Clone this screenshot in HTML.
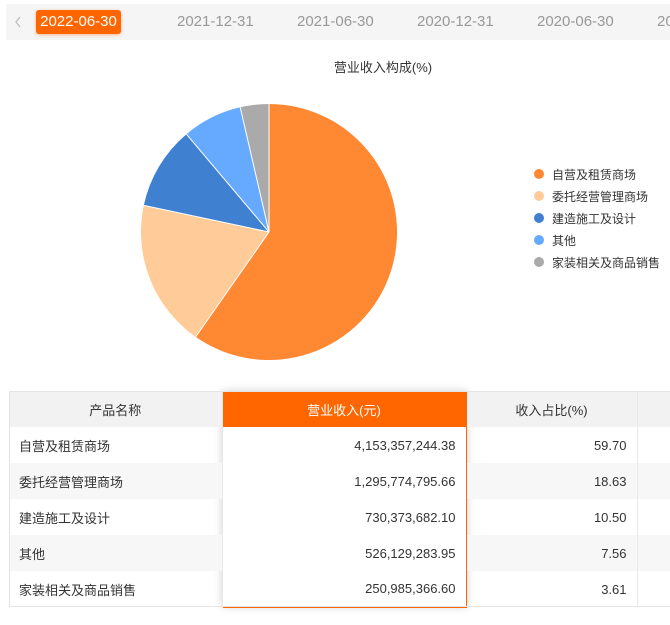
<!DOCTYPE html>
<html><head><meta charset="utf-8"><style>
*{margin:0;padding:0;box-sizing:border-box}
body{width:670px;height:625px;background:#fff;font-family:"Liberation Sans","Noto Sans CJK SC",sans-serif;position:relative;overflow:hidden;color:#333}
.bar{position:absolute;left:6px;top:4px;width:700px;height:36px;background:#f5f5f5}
.tab{position:absolute;top:10px;height:24px;line-height:24px;font-size:15px;color:#999}
.act{left:36px;width:85px;background:#ff6600;color:#fff;text-align:center;border-radius:3px;box-shadow:0 1px 3px rgba(255,102,0,.4)}
.title{position:absolute;top:57px;left:0;width:766px;text-align:center;font-size:13px;color:#333}
.leg{position:absolute;left:534px;font-size:12px;color:#333}
.leg i{position:absolute;left:0;top:3px;width:10px;height:10px;border-radius:50%}
.leg span{margin-left:18px}
.sh{position:absolute;left:222px;top:391px;width:245px;height:216px;box-shadow:0 0 8px rgba(0,0,0,.18)}
table{position:absolute;left:9px;top:391px;border-collapse:collapse;font-size:13px;width:680px}
td{height:36px;padding:0 10px;border-right:1px solid #e8e8e8}
tr.h td{background:#f2f2f2;text-align:center;color:#333}
tr.g td{background:#f7f7f7}
td.c{background:#fff!important;border-left:1px solid #ff6600;border-right:1px solid #ff6600;text-align:right}
tr.h td.c{background:#ff6600!important;color:#fff;text-align:center}
tr.l td.c{border-bottom:1px solid #ff6600}
td.r{text-align:right}
.frame{position:absolute;left:9px;top:391px;width:670px;height:216px;border:1px solid #e5e5e5;pointer-events:none}
</style></head><body>
<div class="bar"></div>
<svg style="position:absolute;left:14px;top:16px" width="8" height="12"><path d="M6,1 L2,6 L6,11" stroke="#bbb" stroke-width="1.2" fill="none"/></svg>
<div class="tab act">2022-06-30</div>
<div class="tab" style="left:177px">2021-12-31</div>
<div class="tab" style="left:297px">2021-06-30</div>
<div class="tab" style="left:417px">2020-12-31</div>
<div class="tab" style="left:537px">2020-06-30</div>
<div class="tab" style="left:657px">20</div>
<div class="title">营业收入构成(%)</div>
<svg style="position:absolute;left:0;top:0" width="670" height="380">
<path d="M269,232 L269,104 A128,128 0 1 1 195.7,336.9 Z" fill="#ff8833"/>
<path d="M269,232 L195.7,336.9 A128,128 0 0 1 143.8,205.4 Z" fill="#ffcc99"/>
<path d="M269,232 L143.8,205.4 A128,128 0 0 1 186.4,134.2 Z" fill="#4080d0"/>
<path d="M269,232 L186.4,134.2 A128,128 0 0 1 240.2,107.3 Z" fill="#66aaff"/>
<path d="M269,232 L240.2,107.3 A128,128 0 0 1 269,104 Z" fill="#aaaaaa"/>
<g stroke="#fff" stroke-width="1" fill="none">
<path d="M269,232 L269,104 M269,232 L195.7,336.9 M269,232 L143.8,205.4 M269,232 L186.4,134.2 M269,232 L240.2,107.3"/></g>
</svg>
<div class="leg" style="top:166px"><i style="background:#ff8833"></i><span>自营及租赁商场</span></div>
<div class="leg" style="top:188px"><i style="background:#ffcc99"></i><span>委托经营管理商场</span></div>
<div class="leg" style="top:210px"><i style="background:#4080d0"></i><span>建造施工及设计</span></div>
<div class="leg" style="top:232px"><i style="background:#66aaff"></i><span>其他</span></div>
<div class="leg" style="top:254px"><i style="background:#aaaaaa"></i><span>家装相关及商品销售</span></div>
<div class="sh"></div>
<table>
<colgroup><col style="width:213px"><col style="width:244px"><col style="width:171px"><col></colgroup>
<tr class="h"><td>产品名称</td><td class="c">营业收入(元)</td><td>收入占比(%)</td><td></td></tr>
<tr><td>自营及租赁商场</td><td class="c">4,153,357,244.38</td><td class="r">59.70</td><td></td></tr>
<tr class="g"><td>委托经营管理商场</td><td class="c">1,295,774,795.66</td><td class="r">18.63</td><td></td></tr>
<tr><td>建造施工及设计</td><td class="c">730,373,682.10</td><td class="r">10.50</td><td></td></tr>
<tr class="g"><td>其他</td><td class="c">526,129,283.95</td><td class="r">7.56</td><td></td></tr>
<tr class="l"><td>家装相关及商品销售</td><td class="c">250,985,366.60</td><td class="r">3.61</td><td></td></tr>
</table>
<div class="frame"></div>
</body></html>
